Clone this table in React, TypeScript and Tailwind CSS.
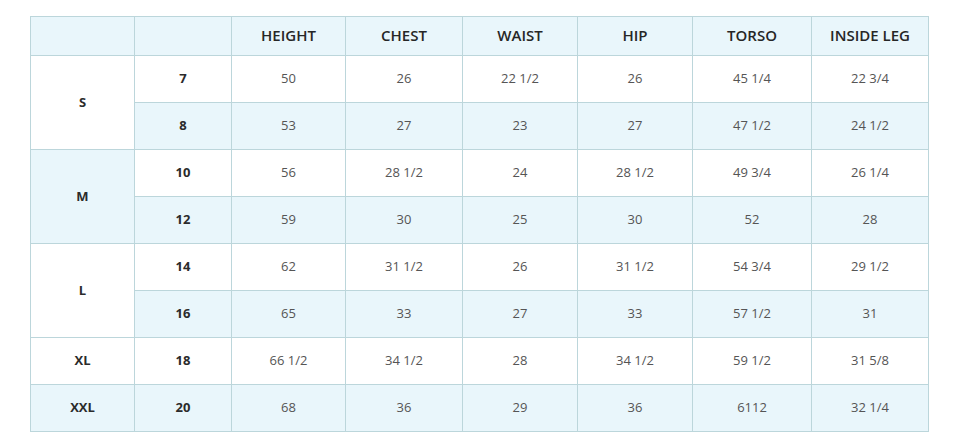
const headers = ['HEIGHT', 'CHEST', 'WAIST', 'HIP', 'TORSO', 'INSIDE LEG'];

type Row = { size: string; values: string[] };
type Group = { label: string; blue: boolean; rows: Row[] };

const groups: Group[] = [
  {
    label: 'S',
    blue: false,
    rows: [
      { size: '7', values: ['50', '26', '22 1/2', '26', '45 1/4', '22 3/4'] },
      { size: '8', values: ['53', '27', '23', '27', '47 1/2', '24 1/2'] },
    ],
  },
  {
    label: 'M',
    blue: true,
    rows: [
      { size: '10', values: ['56', '28 1/2', '24', '28 1/2', '49 3/4', '26 1/4'] },
      { size: '12', values: ['59', '30', '25', '30', '52', '28'] },
    ],
  },
  {
    label: 'L',
    blue: false,
    rows: [
      { size: '14', values: ['62', '31 1/2', '26', '31 1/2', '54 3/4', '29 1/2'] },
      { size: '16', values: ['65', '33', '27', '33', '57 1/2', '31'] },
    ],
  },
  {
    label: 'XL',
    blue: false,
    rows: [{ size: '18', values: ['66 1/2', '34 1/2', '28', '34 1/2', '59 1/2', '31 5/8'] }],
  },
  {
    label: 'XXL',
    blue: true,
    rows: [{ size: '20', values: ['68', '36', '29', '36', '6112', '32 1/4'] }],
  },
];

const cell = 'border border-[#bcd6db] text-center align-middle';

export default function App() {
  let rowIndex = 0;

  return (
    <div className="w-[960px] h-[448px] bg-white pt-4 pl-[30px] font-['Open_Sans',sans-serif]">
      <table className="border-collapse table-fixed w-[898px]">
        <colgroup>
          <col className="w-[104px]" />
          <col className="w-[97px]" />
          <col className="w-[114px]" />
          <col className="w-[117px]" />
          <col className="w-[115px]" />
          <col className="w-[115px]" />
          <col className="w-[119px]" />
          <col className="w-[117px]" />
        </colgroup>
        <thead>
          <tr className="h-[39px] bg-[#e9f6fb]">
            <th className={cell} />
            <th className={cell} />
            {headers.map((h) => (
              <th key={h} className={`${cell} pb-px text-[15px] font-semibold text-[#262626]`}>
                {h}
              </th>
            ))}
          </tr>
        </thead>
        <tbody>
          {groups.map((g) =>
            g.rows.map((r, i) => {
              const blue = rowIndex++ % 2 === 1;
              return (
                <tr key={r.size} className={`h-[47px] ${blue ? 'bg-[#e9f6fb]' : 'bg-white'}`}>
                  {i === 0 && (
                    <td
                      rowSpan={g.rows.length}
                      className={`${cell} text-[13px] font-bold text-[#2b2b2b] ${g.blue ? 'bg-[#e9f6fb]' : 'bg-white'}`}
                    >
                      {g.label}
                    </td>
                  )}
                  <td className={`${cell} text-[13px] font-bold text-[#2b2b2b]`}>{r.size}</td>
                  {r.values.map((v, j) => (
                    <td key={j} className={`${cell} text-[13px] text-[#555]`}>
                      {v}
                    </td>
                  ))}
                </tr>
              );
            })
          )}
        </tbody>
      </table>
    </div>
  );
}
